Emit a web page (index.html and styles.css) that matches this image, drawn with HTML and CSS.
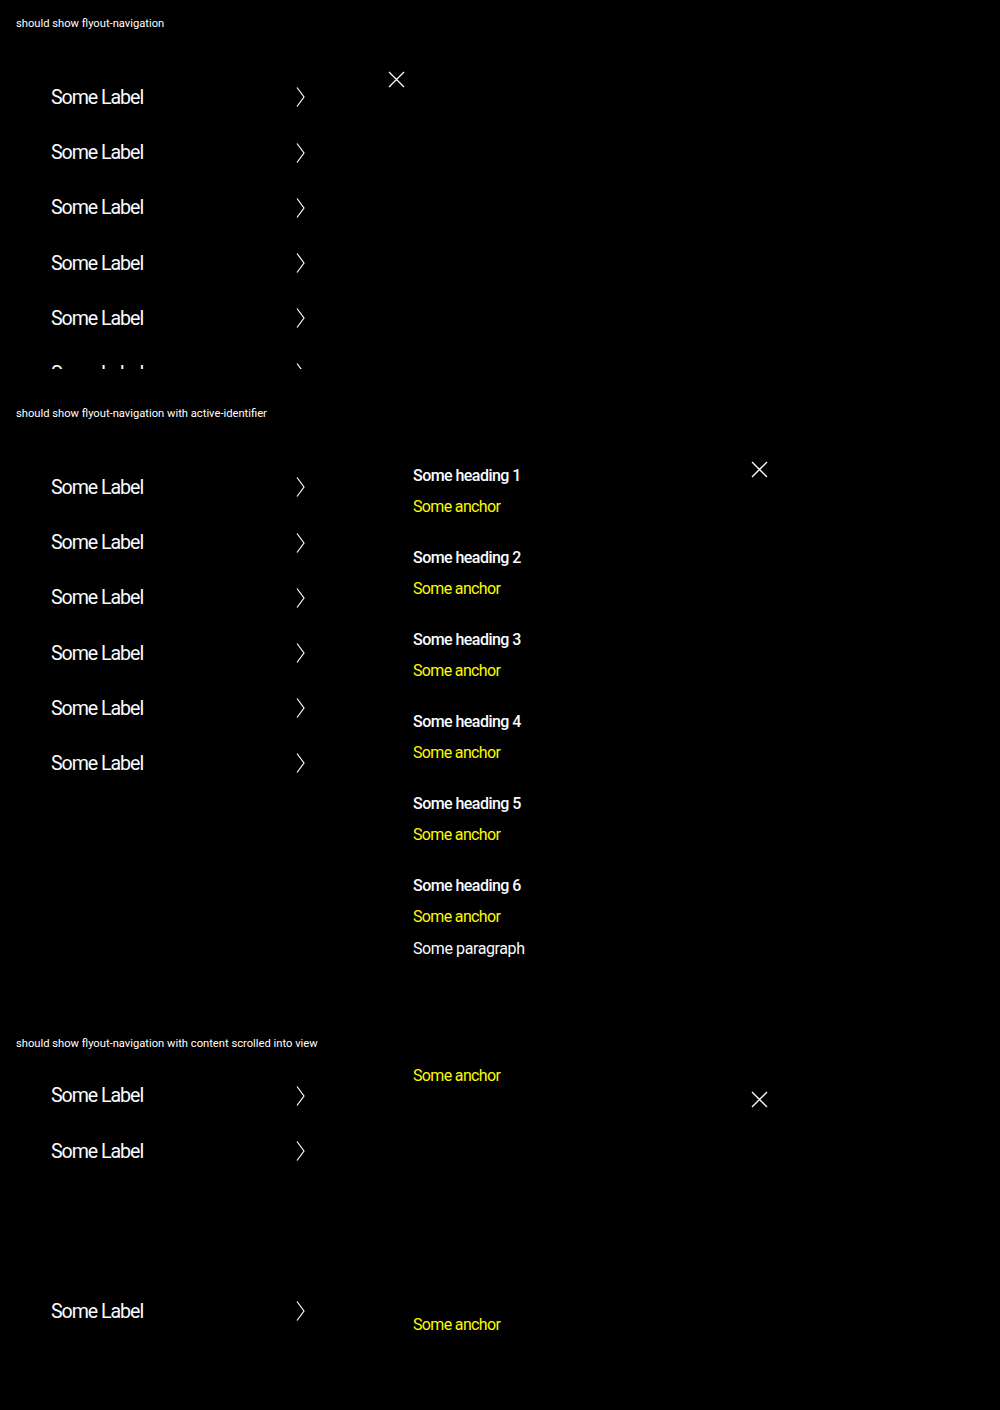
FILE: index.html
```html
<!DOCTYPE html>
<html>
<head>
<meta charset="utf-8">
<link rel="stylesheet" href="styles.css">
</head>
<body>
<section class="section s1">
  <p class="title">should show flyout-navigation</p>
  <div class="frame frame-1">
    <button class="close close-1" aria-label="Close">
      <svg viewBox="0 0 17 17" width="17" height="17"><path d="M1 1 L16 16 M16 1 L1 16" stroke="#fff" stroke-width="1.3" fill="none"/></svg>
    </button>
    <ul class="nav">
      <li class="item"><span>Some Label</span><svg class="chev" viewBox="0 0 9 20" width="9" height="20"><path d="M1 0.5 L8 10 L1 19.5" stroke="#fff" stroke-width="1.2" fill="none"/></svg></li>
      <li class="item"><span>Some Label</span><svg class="chev" viewBox="0 0 9 20" width="9" height="20"><path d="M1 0.5 L8 10 L1 19.5" stroke="#fff" stroke-width="1.2" fill="none"/></svg></li>
      <li class="item"><span>Some Label</span><svg class="chev" viewBox="0 0 9 20" width="9" height="20"><path d="M1 0.5 L8 10 L1 19.5" stroke="#fff" stroke-width="1.2" fill="none"/></svg></li>
      <li class="item"><span>Some Label</span><svg class="chev" viewBox="0 0 9 20" width="9" height="20"><path d="M1 0.5 L8 10 L1 19.5" stroke="#fff" stroke-width="1.2" fill="none"/></svg></li>
      <li class="item"><span>Some Label</span><svg class="chev" viewBox="0 0 9 20" width="9" height="20"><path d="M1 0.5 L8 10 L1 19.5" stroke="#fff" stroke-width="1.2" fill="none"/></svg></li>
      <li class="item"><span>Some Label</span><svg class="chev" viewBox="0 0 9 20" width="9" height="20"><path d="M1 0.5 L8 10 L1 19.5" stroke="#fff" stroke-width="1.2" fill="none"/></svg></li>
    </ul>
  </div>
</section>

<section class="section s2">
  <p class="title">should show flyout-navigation with active-identifier</p>
  <div class="frame frame-2">
    <ul class="nav">
      <li class="item"><span>Some Label</span><svg class="chev" viewBox="0 0 9 20" width="9" height="20"><path d="M1 0.5 L8 10 L1 19.5" stroke="#fff" stroke-width="1.2" fill="none"/></svg></li>
      <li class="item"><span>Some Label</span><svg class="chev" viewBox="0 0 9 20" width="9" height="20"><path d="M1 0.5 L8 10 L1 19.5" stroke="#fff" stroke-width="1.2" fill="none"/></svg></li>
      <li class="item"><span>Some Label</span><svg class="chev" viewBox="0 0 9 20" width="9" height="20"><path d="M1 0.5 L8 10 L1 19.5" stroke="#fff" stroke-width="1.2" fill="none"/></svg></li>
      <li class="item"><span>Some Label</span><svg class="chev" viewBox="0 0 9 20" width="9" height="20"><path d="M1 0.5 L8 10 L1 19.5" stroke="#fff" stroke-width="1.2" fill="none"/></svg></li>
      <li class="item"><span>Some Label</span><svg class="chev" viewBox="0 0 9 20" width="9" height="20"><path d="M1 0.5 L8 10 L1 19.5" stroke="#fff" stroke-width="1.2" fill="none"/></svg></li>
      <li class="item"><span>Some Label</span><svg class="chev" viewBox="0 0 9 20" width="9" height="20"><path d="M1 0.5 L8 10 L1 19.5" stroke="#fff" stroke-width="1.2" fill="none"/></svg></li>
    </ul>
    <div class="sub sub-2">
      <button class="close close-2" aria-label="Close">
        <svg viewBox="0 0 17 17" width="17" height="17"><path d="M1 1 L16 16 M16 1 L1 16" stroke="#fff" stroke-width="1.3" fill="none"/></svg>
      </button>
      <div class="group"><h3 class="heading">Some heading 1</h3><a class="anchor">Some anchor</a></div>
      <div class="group"><h3 class="heading">Some heading 2</h3><a class="anchor">Some anchor</a></div>
      <div class="group"><h3 class="heading">Some heading 3</h3><a class="anchor">Some anchor</a></div>
      <div class="group"><h3 class="heading">Some heading 4</h3><a class="anchor">Some anchor</a></div>
      <div class="group"><h3 class="heading">Some heading 5</h3><a class="anchor">Some anchor</a></div>
      <div class="group last"><h3 class="heading">Some heading 6</h3><a class="anchor">Some anchor</a></div>
      <p class="para">Some paragraph</p>
    </div>
  </div>
</section>

<section class="section s3">
  <p class="title">should show flyout-navigation with content scrolled into view</p>
  <div class="frame frame-3">
    <ul class="nav nav-3">
      <li class="item"><span>Some Label</span><svg class="chev" viewBox="0 0 9 20" width="9" height="20"><path d="M1 0.5 L8 10 L1 19.5" stroke="#fff" stroke-width="1.2" fill="none"/></svg></li>
      <li class="item"><span>Some Label</span><svg class="chev" viewBox="0 0 9 20" width="9" height="20"><path d="M1 0.5 L8 10 L1 19.5" stroke="#fff" stroke-width="1.2" fill="none"/></svg></li>
      <li class="spacer"></li>
      <li class="item"><span>Some Label</span><svg class="chev" viewBox="0 0 9 20" width="9" height="20"><path d="M1 0.5 L8 10 L1 19.5" stroke="#fff" stroke-width="1.2" fill="none"/></svg></li>
    </ul>
    <div class="sub sub-3">
      <button class="close close-3" aria-label="Close">
        <svg viewBox="0 0 17 17" width="17" height="17"><path d="M1 1 L16 16 M16 1 L1 16" stroke="#fff" stroke-width="1.3" fill="none"/></svg>
      </button>
      <a class="anchor">Some anchor</a>
      <div class="gap"></div>
      <a class="anchor">Some anchor</a>
    </div>
  </div>
</section>
</body>
</html>
```

FILE: styles.css
```css
* { box-sizing: border-box; }
html, body {
  margin: 0;
  padding: 0;
  background: #000;
  color: #fbfcff;
  font-family: Roboto, "Liberation Sans", sans-serif;
}
body { height: 1410px; overflow: hidden; }

.section { display: flex; flex-direction: column; }
.s1 { padding-top: 16px; }
.s2 { padding-top: 37px; }
.s3 { padding-top: 0; }

.title {
  margin: 0;
  padding-left: 16px;
  font-size: 11.2px;
  line-height: 16px;
  height: 16px;
  color: #fff;
  letter-spacing: 0;
}

.frame {
  position: relative;
  display: flex;
  align-items: flex-start;
}
.frame-1 { height: 337px; overflow: hidden; }
.frame-2 { height: 614px; }
.frame-3 { height: 359px; overflow: hidden; }

.nav {
  list-style: none;
  margin: 0;
  padding: 37.9px 0 0 51px;
  width: 413px;
  flex: none;
}
.nav-3 { padding-top: 16.4px; }

.item {
  display: flex;
  align-items: center;
  justify-content: space-between;
  width: 254px;
  height: 55.2px;
  font-size: 19.6px;
  letter-spacing: -1.05px;
  color: #fbfcff;
}
.chev { display: block; flex: none; }
.spacer { height: 104.8px; }

.close {
  position: absolute;
  background: none;
  border: 0;
  padding: 0;
  width: 17px;
  height: 17px;
  cursor: pointer;
}
.close svg { display: block; }
.close-1 { left: 388px; top: 39px; }
.close-2, .close-3 { left: 338px; top: 39px; }

.sub {
  position: relative;
  display: flex;
  flex-direction: column;
  align-items: flex-start;
  width: 380px;
}
.sub-2 { padding-top: 42px; }
.sub-3 { padding-top: 12px; }

.group { display: flex; flex-direction: column; align-items: flex-start; margin-bottom: 27px; }
.group.last { margin-bottom: 8px; }

.heading {
  margin: 0 0 7px;
  font-size: 16px;
  line-height: 24px;
  font-weight: 500;
  color: #fbfcff;
  letter-spacing: -0.55px;
}
.anchor {
  font-size: 16px;
  line-height: 24px;
  color: #fbfb00;
  letter-spacing: -0.65px;
}
.para {
  margin: 0;
  font-size: 16px;
  line-height: 24px;
  color: #fbfcff;
  letter-spacing: -0.4px;
}
.gap { height: 225px; }
```
